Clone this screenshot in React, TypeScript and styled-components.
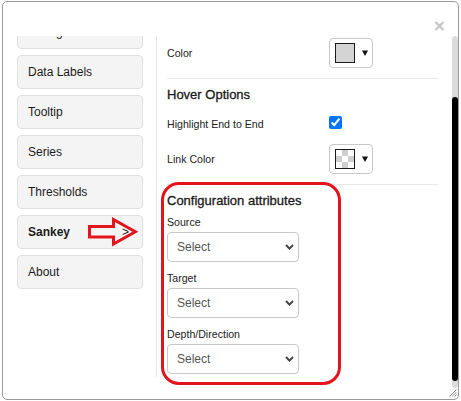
import React from 'react';
import styled, { createGlobalStyle } from 'styled-components';

const Global = createGlobalStyle`
  html, body { margin: 0; padding: 0; background: #fff; }
  body { font-family: "Liberation Sans", Arial, sans-serif; color: #222; }
`;

const Dialog = styled.div`
  box-sizing: border-box;
  margin: 1px 0 0 2px;
  width: 457px;
  height: 399px;
  border: 1px solid #9b9b9b;
  border-radius: 5px;
  background: #fff;
  display: flex;
  position: relative;
  overflow: hidden;
`;

const MainColumn = styled.div`
  flex: 1;
  display: flex;
  flex-direction: column;
  min-width: 0;
`;

const Header = styled.div`
  box-sizing: border-box;
  height: 34px;
  display: flex;
  justify-content: flex-end;
  align-items: flex-start;
  padding: 19px 7px 0 0;
`;

const CloseButton = styled.button`
  border: 0;
  background: none;
  padding: 0;
  margin: 0;
  width: 11px;
  height: 10px;
  display: flex;
  cursor: pointer;
`;

const Body = styled.div`
  display: flex;
  height: 341px;
`;

const Nav = styled.nav`
  box-sizing: border-box;
  width: 154px;
  flex: none;
  border-right: 1px solid #e6e6e6;
  padding-left: 14px;
  overflow: hidden;
`;

const NavList = styled.div`
  display: flex;
  flex-direction: column;
  gap: 6px;
  width: 126px;
  margin-top: -21px;
`;

const NavButton = styled.div<{ $active?: boolean }>`
  position: relative;
  box-sizing: border-box;
  height: 34px;
  border: 1px solid #e1e1e1;
  border-radius: 4px;
  background: #f4f4f4;
  display: flex;
  align-items: center;
  justify-content: space-between;
  padding: 0 13px 0 10px;
  font-size: 12px;
  font-weight: ${p => (p.$active ? 700 : 400)};
  color: #1c1c1c;
`;

const Chevron = styled.span`
  font-weight: 400;
  font-size: 12px;
`;

const ArrowMark = styled.svg`
  position: absolute;
  left: 68px;
  top: -2px;
  width: 56px;
  height: 36px;
  overflow: visible;
  pointer-events: none;
`;

const Panel = styled.div`
  flex: 1;
  box-sizing: border-box;
  padding: 2px 14px 0 10px;
  min-width: 0;
`;

const FieldRow = styled.div<{ $top?: number; $height?: number }>`
  display: flex;
  align-items: center;
  height: ${p => p.$height ?? 30}px;
  margin-top: ${p => p.$top ?? 0}px;
`;

const FieldLabel = styled.span`
  width: 162px;
  flex: none;
  font-size: 10.6px;
  line-height: 20px;
  color: #222;
`;

const Picker = styled.div`
  box-sizing: border-box;
  width: 44px;
  height: 30px;
  border: 1px solid #c8c8c8;
  border-radius: 4px;
  display: flex;
  align-items: center;
  padding-left: 5px;
  gap: 7px;
  background: #fff;
`;

const Swatch = styled.div<{ $checker?: boolean; $color?: string }>`
  box-sizing: border-box;
  width: 20px;
  height: 20px;
  border: 1px solid #1a1a1a;
  background: ${p =>
    p.$checker
      ? 'repeating-conic-gradient(#cfcfcf 0 25%, #fff 0 50%) 0 0 / 12px 12px'
      : p.$color};
`;

const Check = styled.input`
  margin: 1px 0 0 0;
  width: 13px;
  height: 13px;
  align-self: center;
  position: relative;
  top: -2px;
`;

const Divider = styled.div<{ $top: number }>`
  height: 1px;
  background: #e8e8e8;
  margin-top: ${p => p.$top}px;
`;

const SectionTitle = styled.div<{ $top: number }>`
  font-size: 13px;
  line-height: 16px;
  color: #1a1a1a;
  -webkit-text-stroke: 0.3px #1a1a1a;
  margin-top: ${p => p.$top}px;
`;

const ConfigSection = styled.section`
  position: relative;
  padding-top: 8px;
  &::after {
    content: '';
    position: absolute;
    left: -6px;
    top: -3px;
    width: 180px;
    height: 203px;
    box-sizing: border-box;
    border: 3px solid #e3141c;
    border-radius: 18px;
    pointer-events: none;
  }
`;

const SmallLabel = styled.div<{ $top: number }>`
  font-size: 10.6px;
  line-height: 14px;
  color: #222;
  margin-top: ${p => p.$top}px;
`;

const SelectBox = styled.div`
  box-sizing: border-box;
  width: 132px;
  height: 30px;
  margin-top: 3px;
  border: 1px solid #c8c8c8;
  border-radius: 4px;
  display: flex;
  align-items: center;
  justify-content: space-between;
  padding: 0 4px 0 9px;
  font-size: 12px;
  color: #555;
  background: #fff;
`;

const ScrollColumn = styled.div`
  width: 6px;
  flex: none;
  padding-top: 34px;
`;

const Track = styled.div`
  height: 352px;
  background: #dcdcdc;
  border-radius: 3px;
  overflow: hidden;
`;

const Thumb = styled.div`
  margin-top: 61px;
  height: 284px;
  background: #000;
  border-radius: 3px;
`;

const Grip = styled.svg`
  position: absolute;
  right: 1px;
  bottom: 2px;
  width: 8px;
  height: 8px;
`;

const Caret = () => (
  <svg width="6" height="6" viewBox="0 0 6 6">
    <polygon points="0,0.5 6,0.5 3,6" fill="#111" />
  </svg>
);

const SelectChevron = () => (
  <svg width="9" height="6" viewBox="0 0 9 6">
    <polyline points="1,1 4.5,4.6 8,1" fill="none" stroke="#444" strokeWidth="2" />
  </svg>
);

const Select = ({ label, top }: { label: string; top: number }) => (
  <>
    <SmallLabel $top={top}>{label}</SmallLabel>
    <SelectBox>
      <span>Select</span>
      <SelectChevron />
    </SelectBox>
  </>
);

const navItems = ['Config', 'Data Labels', 'Tooltip', 'Series', 'Thresholds', 'Sankey', 'About'];

export default function App() {
  return (
    <>
      <Global />
      <Dialog>
        <MainColumn>
          <Header>
            <CloseButton aria-label="Close">
              <svg width="11" height="10" viewBox="0 0 11 10">
                <path d="M1.5 1 L9.5 9 M9.5 1 L1.5 9" stroke="#c6c6c6" strokeWidth="2.4" />
              </svg>
            </CloseButton>
          </Header>
          <Body>
            <Nav>
              <NavList>
                {navItems.map(item => (
                  <NavButton key={item} $active={item === 'Sankey'}>
                    <span>{item}</span>
                    {item === 'Sankey' && (
                      <>
                        <Chevron>&gt;</Chevron>
                        <ArrowMark viewBox="0 0 56 36">
                          <polygon
                            points="3.5,12.5 27.5,12.5 27.5,5.5 49.3,17.75 27.5,30 27.5,23 3.5,23"
                            fill="none"
                            stroke="#e3141c"
                            strokeWidth="3"
                            strokeLinejoin="miter"
                          />
                        </ArrowMark>
                      </>
                    )}
                  </NavButton>
                ))}
              </NavList>
            </Nav>
            <Panel>
              <FieldRow>
                <FieldLabel>Color</FieldLabel>
                <Picker>
                  <Swatch $color="#d4d4d4" />
                  <Caret />
                </Picker>
              </FieldRow>
              <Divider $top={10} />
              <SectionTitle $top={8}>Hover Options</SectionTitle>
              <FieldRow $top={11} $height={20}>
                <FieldLabel>Highlight End to End</FieldLabel>
                <Check type="checkbox" checked readOnly />
              </FieldRow>
              <FieldRow $top={10}>
                <FieldLabel>Link Color</FieldLabel>
                <Picker>
                  <Swatch $checker />
                  <Caret />
                </Picker>
              </FieldRow>
              <Divider $top={10} />
              <ConfigSection>
                <SectionTitle $top={0}>Configuration attributes</SectionTitle>
                <Select label="Source" top={6} />
                <Select label="Target" top={9} />
                <Select label="Depth/Direction" top={9} />
              </ConfigSection>
            </Panel>
          </Body>
        </MainColumn>
        <ScrollColumn>
          <Track>
            <Thumb />
          </Track>
        </ScrollColumn>
        <Grip viewBox="0 0 8 8">
          <path d="M7.5 0.5 L0.5 7.5 M7.5 3 L3 7.5 M7.5 5.5 L5.5 7.5" stroke="#8a8a8a" strokeWidth="1" />
        </Grip>
      </Dialog>
    </>
  );
}
